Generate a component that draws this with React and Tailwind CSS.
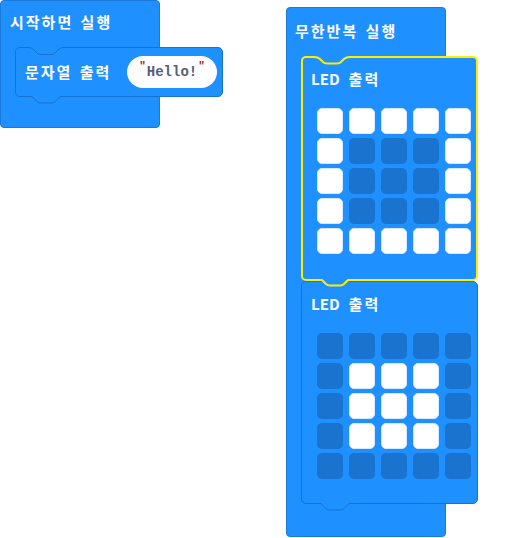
const NOTCH =
  "C3,V 4,1 6,3 L9,6 C10,7 11,7.5 13,7.5 L23,7.5 C25,7.5 26,7 27,6 L30,3 C32,1 33,V 36,V";

const notchPath = (w) => "M0," + w / 2 + " " + NOTCH.split("V").join(String(w / 2));

// dent on the top edge of a statement block
const TopNotch = ({ color = "#1873cc", width = 1, className }) => (
  <svg className={"absolute " + className} width="36" height="10" viewBox="0 0 36 10">
    <rect x="1" y="0" width="34" height={width + 1} fill="#1e90ff" />
    <path d={notchPath(width)} fill="none" stroke={color} strokeWidth={width} />
  </svg>
);

// tab below a statement block
const BottomTab = ({ color = "#1873cc", width = 1, className }) => (
  <svg className={"absolute top-full " + className} width="36" height="11" viewBox="0 0 36 11">
    <path d={notchPath(width) + " Z"} fill="#1e90ff" transform={"translate(0," + -width + ")"} />
    <path
      d={notchPath(width)}
      fill="none"
      stroke={color}
      strokeWidth={width}
      transform={"translate(0," + -width / 2 + ")"}
    />
  </svg>
);

const LedGrid = ({ rows }) => (
  <div className="grid grid-cols-5 gap-x-[6px] gap-y-[4px] w-max">
    {rows.flatMap((row, r) =>
      row.split("").map((c, i) => (
        <div
          key={r + "-" + i}
          className={
            c === "#"
              ? "w-[26px] h-[26px] rounded-[5px] bg-white border border-[#d6e9ff]"
              : "w-[26px] h-[26px] rounded-[5px] bg-[#1a73cf]"
          }
        />
      ))
    )}
  </div>
);

const LedLabel = () => (
  <div className="flex items-center text-white font-bold text-[15px] leading-[20px] font-['Noto_Sans_CJK_KR','Noto_Sans',sans-serif]">
    <span>LED</span>
    <span className="ml-[9px] tracking-[2px]">출력</span>
  </div>
);

const LedBlock = ({ selected, rows }) => (
  <div
    className={
      selected
        ? "relative z-10 w-[177px] h-[225px] rounded-[5px] bg-[#1e90ff] border-2 border-[#ffee00] pl-[8px] pt-[11px] flex flex-col"
        : "relative w-[177px] h-[223px] rounded-[5px] bg-[#1e90ff] border border-[#1873cc] pl-[9px] pt-[12px] flex flex-col"
    }
  >
    {selected ? <TopNotch color="#ffee00" width={2} className="left-[11px] -top-[2px]" /> : null}
    <LedLabel />
    <div className="pl-[6px] pt-[19px]">
      <LedGrid rows={rows} />
    </div>
    {selected ? (
      <BottomTab color="#ffee00" width={2} className="left-[14px]" />
    ) : (
      <BottomTab className="left-[15px]" />
    )}
  </div>
);

const Label = ({ children, className }) => (
  <div
    className={
      "text-white font-bold text-[15px] leading-[20px] tracking-[2px] [word-spacing:2px] font-['Noto_Sans_CJK_KR','Noto_Sans',sans-serif] " +
      className
    }
  >
    {children}
  </div>
);

export default function App() {
  return (
    <div className="relative w-[530px] h-[538px] bg-white overflow-hidden">
      {/* 시작하면 실행 */}
      <div className="absolute left-0 top-0 w-[160px] rounded-[4px] bg-[#1e90ff] border border-[#1a7ad9] flex flex-col">
        <div className="h-[46px] pl-[9px] pt-[11px]">
          <Label>시작하면 실행</Label>
        </div>
        <div className="relative ml-[14px] w-[208px] h-[50px] rounded-[5px] bg-[#1e90ff] border border-[#1873cc] flex items-center">
          <TopNotch className="left-[12px] -top-px" />
          <Label className="pl-[9px]">문자열 출력</Label>
          <div className="ml-auto mr-[5px] w-[90px] h-[32px] rounded-full bg-white flex items-center justify-center font-['Liberation_Mono',monospace] font-bold">
            <span className="text-[#a31515] text-[11px] leading-none self-start mt-[5px]">"</span>
            <span className="text-[#575e75] text-[14px] leading-none mx-[1px]">Hello!</span>
            <span className="text-[#a31515] text-[11px] leading-none self-start mt-[5px]">"</span>
          </div>
          <BottomTab className="left-[12px]" />
        </div>
        <div className="h-[30px]" />
      </div>

      {/* 무한반복 실행 */}
      <div className="absolute left-[286px] top-[7px] w-[160px] rounded-[4px] bg-[#1e90ff] border border-[#1a7ad9] flex flex-col">
        <div className="h-[48px] pl-[8px] pt-[13px]">
          <Label>무한반복 실행</Label>
        </div>
        <div className="ml-[14px] flex flex-col">
          <LedBlock selected rows={["#####", "#...#", "#...#", "#...#", "#####"]} />
          <LedBlock rows={[".....", ".###.", ".###.", ".###.", "....."]} />
        </div>
        <div className="h-[32px]" />
      </div>
    </div>
  );
}
